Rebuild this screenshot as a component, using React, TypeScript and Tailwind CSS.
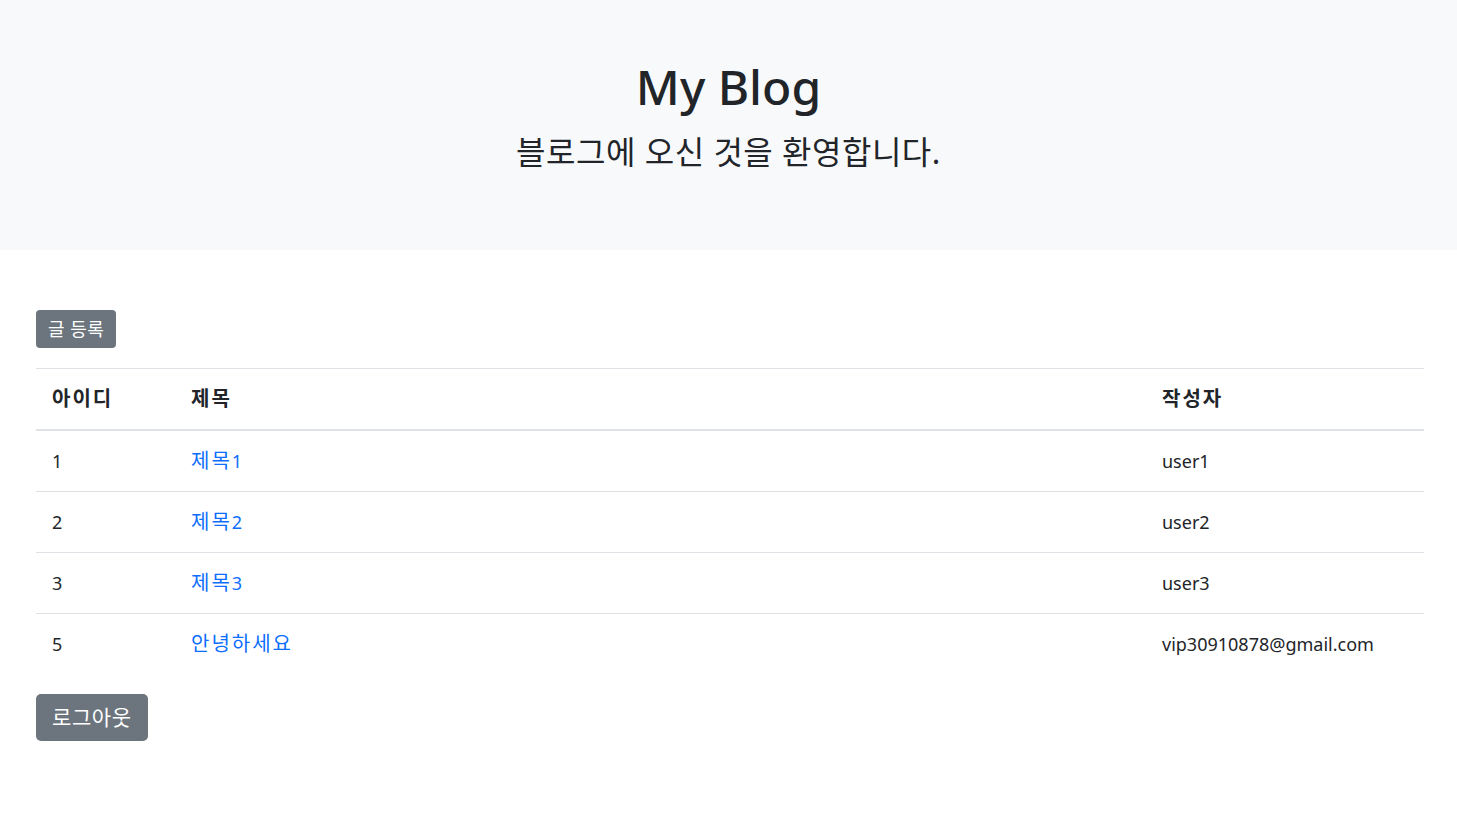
import React from "react";

const posts = [
  { id: 1, title: "제목", num: "1", writer: "user1" },
  { id: 2, title: "제목", num: "2", writer: "user2" },
  { id: 3, title: "제목", num: "3", writer: "user3" },
  { id: 5, title: "안녕하세요", num: "", writer: "vip30910878@gmail.com" },
];

const font = "font-['Noto_Sans','Noto_Sans_CJK_KR',sans-serif]";

// korean glyphs come out narrower than in the original, so bump them a little
const Ko = ({ children }: { children: React.ReactNode }) => (
  <span className="text-[20px] tracking-[2px]">{children}</span>
);

const App = () => {
  return (
    <div className={`${font} min-h-[818px] bg-white text-[#212529]`}>
      <div className="h-[250px] bg-[#f8f9fa] pt-[54px] text-center">
        <h1 className="text-[48px] font-medium leading-[66px]">My Blog</h1>
        <p className="mt-[12px] text-[32px] leading-[40px] tracking-[0.5px]">
          블로그에 오신 것을 환영합니다.
        </p>
      </div>

      <div className="pl-[36px] pr-[33px] pt-[60px]">
        <button className="h-[38px] rounded-[4px] bg-[#6c757d] px-[12px] text-[18px] leading-[38px] tracking-[0.5px] text-white">
          글 등록
        </button>

        <table className="mt-[20px] w-full border-t border-[#dee2e6] text-[18px]">
          <thead>
            <tr className="border-b-2 border-[#dee2e6]">
              <th className="w-[139px] px-4 py-4 text-left font-bold leading-[28px]">
                <Ko>아이디</Ko>
              </th>
              <th className="px-4 py-4 text-left font-bold leading-[28px]">
                <Ko>제목</Ko>
              </th>
              <th className="w-[278px] px-4 py-4 text-left font-bold leading-[28px]">
                <Ko>작성자</Ko>
              </th>
            </tr>
          </thead>
          <tbody>
            {posts.map((post, index) => (
              <tr
                key={post.id}
                className={index < posts.length - 1 ? "border-b border-[#dee2e6]" : ""}
              >
                <td className="px-4 py-4 leading-[28px]">{post.id}</td>
                <td className="px-4 py-4 leading-[28px]">
                  <a href="#" className="text-[#0d6efd]">
                    <Ko>{post.title}</Ko>
                    {post.num}
                  </a>
                </td>
                <td className="px-4 py-4 leading-[28px]">{post.writer}</td>
              </tr>
            ))}
          </tbody>
        </table>

        <button className="mt-[20px] h-[47px] rounded-[5px] bg-[#6c757d] px-[16px] text-[21px] leading-[47px] tracking-[0.6px] text-white">
          로그아웃
        </button>
      </div>
    </div>
  );
};

export default App;
